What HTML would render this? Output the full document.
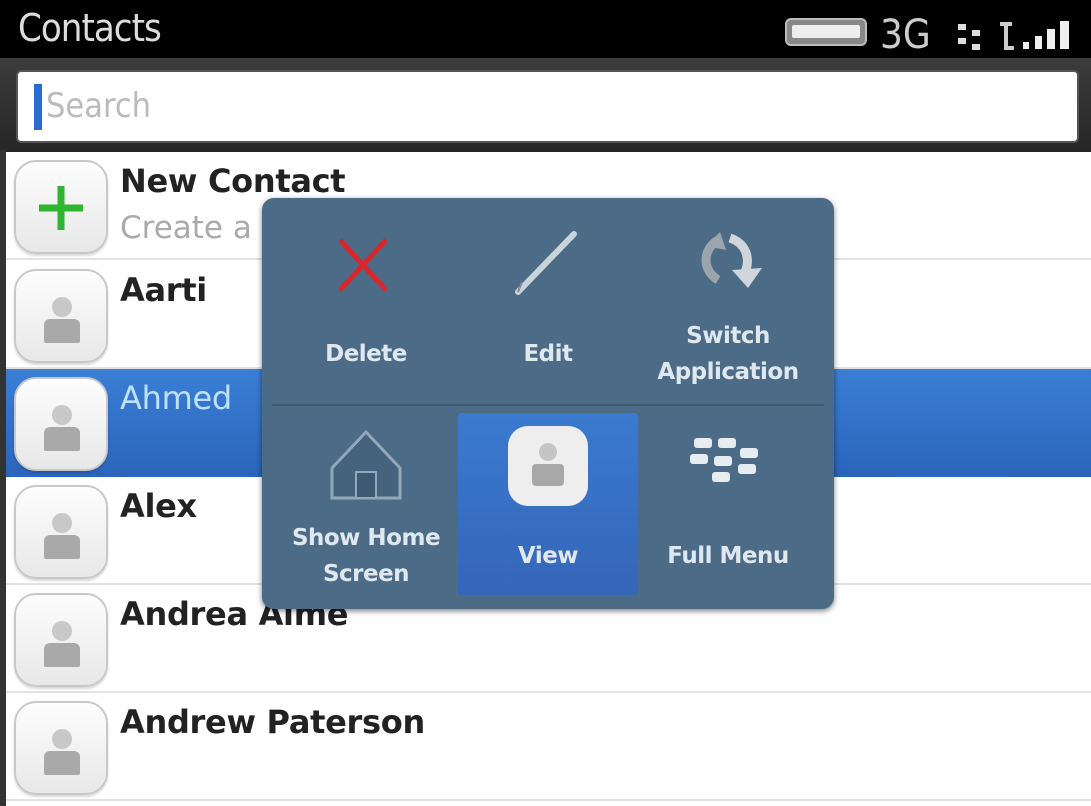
<!DOCTYPE html>
<html><head><style>
*{margin:0;padding:0;box-sizing:border-box}
body{width:1091px;height:806px;overflow:hidden;background:#fff;font-family:"DejaVu Sans","Liberation Sans",sans-serif;position:relative}
.hdr{position:absolute;left:0;top:0;width:1091px;height:60px;background:#000}
.hdr .t{position:absolute;left:18px;top:6px;color:#ddd;font-size:38px;font-family:"DejaVu Sans Condensed","DejaVu Sans",sans-serif;letter-spacing:-1px}
.sb{position:absolute;left:0;top:58px;width:1091px;height:94px;background:linear-gradient(#3c3c3c,#262626)}
.field{position:absolute;left:16px;top:70px;width:1063px;height:73px;background:#fff;border-radius:5px;border:2px solid #555}
.field .cur{position:absolute;left:16px;top:12px;width:8px;height:46px;background:#2a6dd0}
.field .ph{position:absolute;left:28px;top:14px;font-size:34px;color:#bbb;font-family:"DejaVu Sans Condensed","DejaVu Sans",sans-serif}
.lstrip{position:absolute;left:0;top:150px;width:6px;height:656px;background:#333}
.row{position:absolute;left:6px;width:1085px;height:108px;border-bottom:2px solid #e2e2e2;background:#fff}
.row.sel{background:linear-gradient(#3a7fd6,#2a64bb);border-bottom:none}
.av{position:absolute;left:8px;top:8px;width:94px;height:94px;border-radius:22px;background:linear-gradient(#fdfdfd,#e8e8e8);border:2px solid #c8c8c8;box-shadow:0 2px 2px rgba(0,0,0,.15)}
.av .h{position:absolute;left:36px;top:26px;width:20px;height:20px;border-radius:50%;background:#c8c8c8}
.av .b{position:absolute;left:28px;top:48px;width:36px;height:24px;border-radius:6px 6px 2px 2px;background:#a9a9a9}
.nm{position:absolute;left:114px;top:10px;font-size:32px;font-weight:bold;color:#222;letter-spacing:-0.3px}
.sel .nm{color:#bfe0ff;font-weight:normal}
.sub{position:absolute;left:114px;top:58px;font-size:31px;color:#aaa}
.pop{position:absolute;left:262px;top:198px;width:572px;height:411px;background:#4c6b86;border-radius:12px;box-shadow:0 2px 6px rgba(0,0,0,.5)}
.cell{position:absolute;width:180px;color:#dfe8ef;font-size:23px;font-weight:bold;text-align:center;line-height:36px;letter-spacing:-0.5px}
.vsel{position:absolute;left:196px;top:215px;width:180px;height:182px;background:linear-gradient(#3b7ad0,#3466b8);border-radius:3px}
.div{position:absolute;left:10px;top:206px;width:552px;height:2px;background:#3f5a72}
</style></head><body>
<div class="hdr"><div class="t">Contacts</div>
<svg style="position:absolute;left:780px;top:8px" width="311" height="46">
<rect x="6" y="11" width="80" height="26" rx="5" fill="#888" stroke="#bbb" stroke-width="2"/>
<rect x="12" y="17" width="68" height="13" rx="2" fill="#eee"/>
<text x="100" y="40" font-size="40" fill="#ccc" font-family="DejaVu Sans Condensed,DejaVu Sans,sans-serif">3G</text>
<rect x="178" y="16" width="8" height="6" fill="#ddd"/><rect x="178" y="30" width="8" height="6" fill="#ddd"/><rect x="192" y="22" width="8" height="6" fill="#ddd"/><rect x="192" y="36" width="8" height="6" fill="#ddd"/>
<path d="M220 16h12M226 16v24h8" stroke="#ccc" stroke-width="4" fill="none"/>
<rect x="243" y="34" width="6" height="7" fill="#eee"/><rect x="255" y="28" width="7" height="13" fill="#eee"/><rect x="267" y="21" width="8" height="20" fill="#eee"/><rect x="280" y="13" width="9" height="28" fill="#eee"/>
</svg></div>
<div class="sb"></div>
<div class="field"><div class="cur"></div><div class="ph">Search</div></div>
<div class="lstrip"></div>

<div class="row" style="top:152px"><div class="av"><svg width="94" height="94" style="position:absolute;left:-2px;top:-2px"><path d="M47 26v44M25 48h44" stroke="#2fb52f" stroke-width="7"/></svg></div><div class="nm">New Contact</div><div class="sub">Create a</div></div>
<div class="row" style="top:261px"><div class="av"><div class="h"></div><div class="b"></div></div><div class="nm">Aarti</div></div>
<div class="row sel" style="top:369px"><div class="av"><div class="h"></div><div class="b"></div></div><div class="nm">Ahmed</div></div>
<div class="row" style="top:477px"><div class="av"><div class="h"></div><div class="b"></div></div><div class="nm">Alex</div></div>
<div class="row" style="top:585px"><div class="av"><div class="h"></div><div class="b"></div></div><div class="nm">Andrea Aime</div></div>
<div class="row" style="top:693px"><div class="av"><div class="h"></div><div class="b"></div></div><div class="nm">Andrew Paterson</div></div>

<div class="pop">
<div class="div"></div>
<div class="vsel"></div>
<svg style="position:absolute;left:0;top:0" width="572" height="411">
<path d="M78 42L124 92M124 42L78 92" stroke="#d8262a" stroke-width="5"/>
<path d="M256 94L312 36" stroke="#c9d3da" stroke-width="6" stroke-linecap="round"/><path d="M256 94l4-10" stroke="#889" stroke-width="2"/>
<path d="M456 82c-16-10-16-30 0-40" stroke="#9aa5ae" stroke-width="9" fill="none"/><path d="M444 48l14-14 6 18z" fill="#9aa5ae"/>
<path d="M468 40c18 6 22 24 12 40" stroke="#d0d6db" stroke-width="9" fill="none"/><path d="M470 72l16 18 14-20z" fill="#d0d6db"/>
<path d="M70 270L104 234 138 270V300H70Z" fill="#46637d" stroke="#93a8b8" stroke-width="3"/><rect x="94" y="274" width="20" height="26" fill="#3e5a72" stroke="#93a8b8" stroke-width="2"/>
<rect x="246" y="228" width="80" height="80" rx="20" fill="#eee"/><circle cx="286" cy="254" r="9" fill="#c5c5c5"/><rect x="270" y="266" width="32" height="22" rx="4" fill="#a8a8a8"/>
<g fill="#e6ecf0"><rect x="432" y="240" width="18" height="10" rx="3"/><rect x="456" y="240" width="18" height="10" rx="3"/><rect x="428" y="256" width="18" height="10" rx="3"/><rect x="452" y="258" width="18" height="10" rx="3"/><rect x="478" y="250" width="18" height="10" rx="3"/><rect x="476" y="266" width="18" height="10" rx="3"/><rect x="450" y="274" width="18" height="10" rx="3"/></g>
</svg>
<div class="cell" style="left:14px;top:138px">Delete</div>
<div class="cell" style="left:196px;top:138px">Edit</div>
<div class="cell" style="left:376px;top:120px">Switch<br>Application</div>
<div class="cell" style="left:14px;top:322px">Show Home<br>Screen</div>
<div class="cell" style="left:196px;top:340px">View</div>
<div class="cell" style="left:376px;top:340px">Full Menu</div>
</div>
</body></html>
